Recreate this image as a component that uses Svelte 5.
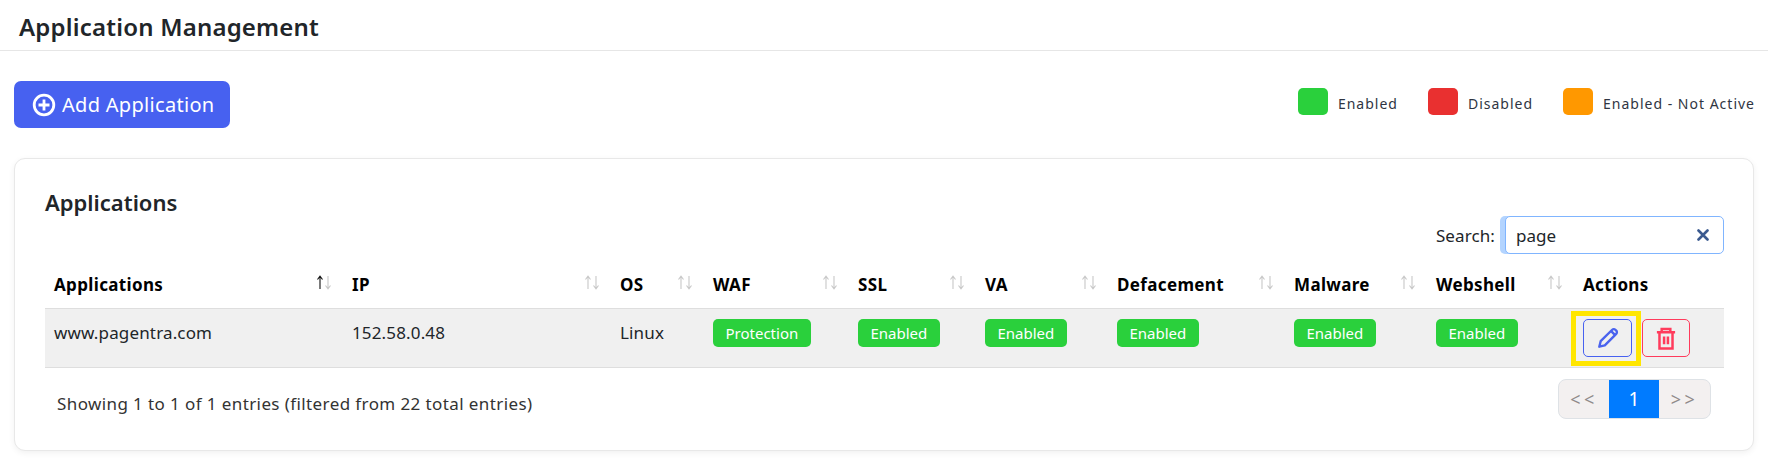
<script lang="ts">
  const legend = [
    { label: "Enabled", color: "#2ad03c" },
    { label: "Disabled", color: "#e93030" },
    { label: "Enabled - Not Active", color: "#ff9800" },
  ];
  const columns = [
    { name: "Applications", width: 298, active: true },
    { name: "IP", width: 268 },
    { name: "OS", width: 93 },
    { name: "WAF", width: 145 },
    { name: "SSL", width: 127 },
    { name: "VA", width: 132 },
    { name: "Defacement", width: 177 },
    { name: "Malware", width: 142 },
    { name: "Webshell", width: 147 },
    { name: "Actions", width: 150, noSort: true },
  ];
  const badges = ["Protection", "Enabled", "Enabled", "Enabled", "Enabled", "Enabled"];
  let search = $state("page");
</script>

<div class="page">
  <header class="topbar"><h1>Application Management</h1></header>

  <div class="toolbar">
    <button class="add-btn">
      <svg width="24" height="24" viewBox="0 0 24 24" fill="none" stroke="#fff" stroke-width="2.8">
        <circle cx="12" cy="12" r="9.8" />
        <path d="M12 6.5v11M6.5 12h11" />
      </svg>
      Add Application
    </button>
    <ul class="legend">
      {#each legend as item}
        <li><span class="swatch" style="background: {item.color}"></span><span class="legend-label">{item.label}</span></li>
      {/each}
    </ul>
  </div>

  <section class="card">
    <h2>Applications</h2>
    <div class="search-row">
      <label for="search">Search:</label>
      <div class="search-box">
        <input id="search" bind:value={search} />
        <svg class="clear" width="12" height="12" viewBox="0 0 12 12" stroke="#3b5a8f" stroke-width="2.6" stroke-linecap="round">
          <path d="M1.5 1.5l9 9M10.5 1.5l-9 9" />
        </svg>
      </div>
    </div>

    <table>
      <colgroup>
        {#each columns as col}
          <col style="width: {col.width}px" />
        {/each}
      </colgroup>
      <thead>
        <tr>
          {#each columns as col}
            <th>
              <div class="th-inner">
                <span>{col.name}</span>
                {#if !col.noSort}
                  <svg class="sort" width="16" height="15" viewBox="0 0 16 15" fill="none" stroke-width="1.1">
                    <path d="M4 14V1.5M1.5 4.5L4 1.2l2.5 3.3" stroke={col.active ? "#111" : "#c8c8c8"} />
                    <path d="M12 1v12.5M9.5 10.5L12 13.8l2.5-3.3" stroke="#c8c8c8" />
                  </svg>
                {/if}
              </div>
            </th>
          {/each}
        </tr>
      </thead>
      <tbody>
        <tr>
          <td>www.pagentra.com</td>
          <td>152.58.0.48</td>
          <td>Linux</td>
          {#each badges as badge}
            <td><span class="badge">{badge}</span></td>
          {/each}
          <td>
            <div class="actions">
              <button class="icon-btn edit" aria-label="Edit">
                <svg width="22" height="22" viewBox="0 0 24 24" fill="none" stroke="#4a63ee" stroke-width="2.6" stroke-linejoin="round">
                  <path d="M2.5 21.5l1.500-6L16.600 3a2.400 2.400 0 0 1 3.400 0l1 1a2.400 2.400 0 0 1 0 3.400L8.500 20z" />
                  <path d="M15.500 4.500l4 4" />
                </svg>
              </button>
              <button class="icon-btn del" aria-label="Delete">
                <svg width="22" height="23" viewBox="0 0 22 24" fill="none" stroke="#ff3b5c" stroke-width="2.6">
                  <path d="M1.500 5.500h19M6.500 5.500V2h9v3.500" />
                  <path d="M4.200 5.500V22.500h13.600V5.500" />
                  <path d="M9 10v8M13 10v8" />
                </svg>
              </button>
              <span class="highlight"></span>
            </div>
          </td>
        </tr>
      </tbody>
    </table>

    <div class="table-foot">
      <span class="info">Showing 1 to 1 of 1 entries (filtered from 22 total entries)</span>
      <nav class="pager">
        <span class="page-link">&lt;&lt;</span>
        <span class="page-link current">1</span>
        <span class="page-link last">&gt;&gt;</span>
      </nav>
    </div>
  </section>
</div>

<style>
  :global(body) {
    background: #fff;
    font-family: "Noto Sans", "Open Sans", sans-serif;
    color: #212529;
  }
  .page {
    width: 1768px;
    height: 468px;
    overflow: hidden;
  }
  .topbar {
    height: 50px;
    border-bottom: 1px solid #e6e6e6;
    padding-left: 19px;
  }
  h1 {
    margin: 0;
    font-size: 24px;
    font-weight: 600;
    letter-spacing: 0.2px;
    line-height: 53px;
    color: #212529;
  }
  .toolbar {
    display: flex;
    justify-content: space-between;
    align-items: flex-start;
    padding: 30px 13px 0 14px;
    height: 77px;
  }
  .add-btn {
    display: flex;
    align-items: center;
    gap: 6px;
    width: 216px;
    height: 47px;
    padding: 0 0 0 18px;
    border: none;
    border-radius: 7px;
    background: #4761f0;
    color: #fff;
    font-family: inherit;
    font-size: 20px;
    letter-spacing: 0.3px;
  }
  .legend {
    display: flex;
    gap: 30px;
    list-style: none;
    margin: 7px 0 0;
    padding: 0;
    font-size: 14px;
    letter-spacing: 1px;
    line-height: 27px;
    color: #2f3542;
  }
  .legend li {
    display: flex;
    align-items: flex-start;
    gap: 10px;
  }
  .legend-label {
    padding-top: 2px;
  }
  .swatch {
    width: 30px;
    height: 27px;
    border-radius: 5px;
  }
  .card {
    margin-left: 14px;
    width: 1740px;
    height: 293px;
    box-sizing: border-box;
    padding: 0 29px 0 30px;
    border: 1px solid #e8e8e8;
    border-radius: 11px;
    box-shadow: 0 2px 6px rgba(0, 0, 0, 0.06);
    background: #fff;
  }
  h2 {
    margin: 0;
    padding-top: 28px;
    font-size: 22px;
    font-weight: 600;
    line-height: 30px;
    color: #212529;
  }
  .search-row {
    display: flex;
    justify-content: flex-end;
    align-items: center;
    gap: 10px;
    margin-top: -1px;
    height: 38px;
    font-size: 17px;
    letter-spacing: 0.1px;
    color: #212529;
  }
  .search-box {
    position: relative;
    width: 219px;
    height: 38px;
  }
  input {
    width: 100%;
    height: 100%;
    box-sizing: border-box;
    padding: 0 40px 0 10px;
    border: 1px solid #80b5ff;
    border-radius: 5px;
    box-shadow: -5px 0 0 #b3d4ff;
    font-family: inherit;
    font-size: 17px;
    color: #212529;
    outline: none;
  }
  .clear {
    position: absolute;
    right: 15px;
    top: 13px;
  }
  table {
    width: 1679px;
    margin-top: 8px;
    border-collapse: collapse;
    table-layout: fixed;
  }
  th {
    padding: 0 11px 0 9px;
    height: 46px;
    border-bottom: 1px solid #dedede;
    text-align: left;
    font-size: 17px;
    font-weight: 700;
    letter-spacing: 0.35px;
    color: #000;
  }
  .th-inner {
    display: flex;
    justify-content: space-between;
    align-items: flex-start;
  }
  .th-inner span {
    margin-top: -1px;
  }
  .sort {
    margin-top: 1px;
    flex: none;
  }
  td {
    height: 58px;
    padding: 0 9px;
    background: #f0f0f0;
    border-bottom: 1px solid #dedede;
    font-size: 17px;
    letter-spacing: 0.15px;
    color: #212529;
    vertical-align: top;
    line-height: 48px;
  }
  .badge {
    display: inline-block;
    height: 28px;
    margin-top: 10px;
    padding: 0 12.5px;
    border-radius: 5px;
    background: #2ad03c;
    color: #fff;
    font-size: 15px;
    letter-spacing: 0;
    line-height: 28px;
    vertical-align: top;
  }
  .actions {
    position: relative;
    display: flex;
    gap: 10px;
    padding-top: 10px;
  }
  .icon-btn {
    display: flex;
    align-items: center;
    justify-content: center;
    height: 38px;
    padding: 0;
    background: transparent;
    border-radius: 5px;
  }
  .edit {
    width: 49px;
    border: 1px solid #4761f0;
  }
  .del {
    width: 48px;
    border: 1px solid #ff3b5c;
  }
  .highlight {
    position: absolute;
    left: -12px;
    top: 2px;
    width: 70px;
    height: 55px;
    box-sizing: border-box;
    border: 5px solid #ffe600;
  }
  .table-foot {
    display: flex;
    justify-content: space-between;
    align-items: center;
    padding: 11px 13px 0 12px;
  }
  .info {
    padding-top: 9px;
    font-size: 17px;
    letter-spacing: 0.4px;
    color: #333;
  }
  .pager {
    display: flex;
    height: 40px;
    box-sizing: border-box;
    border: 1px solid #dee2e6;
    border-radius: 8px;
    background: #f3f0f0;
    overflow: hidden;
  }
  .page-link {
    width: 50px;
    display: flex;
    align-items: center;
    justify-content: center;
    font-size: 18px;
    letter-spacing: 3.5px;
    color: #8f8a8a;
  }
  .last {
    width: 51px;
  }
  .current {
    background: #007bff;
    color: #fff;
    letter-spacing: 0;
    font-size: 19px;
    margin: -1px 0;
  }
</style>
